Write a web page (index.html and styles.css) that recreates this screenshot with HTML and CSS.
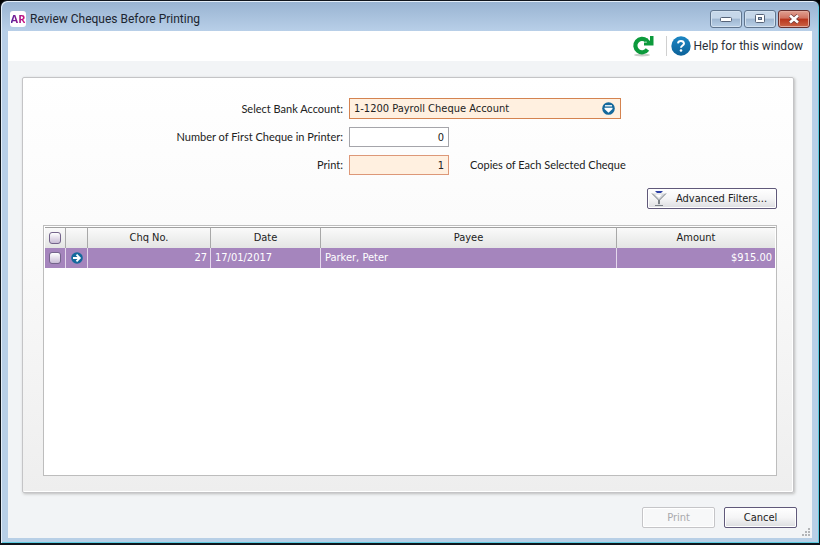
FILE: index.html
```html
<!DOCTYPE html>
<html lang="en">
<head>
<meta charset="utf-8">
<title>Review Cheques Before Printing</title>
<link rel="stylesheet" href="styles.css">
</head>
<body>
<div class="window">
  <header class="titlebar">
    <span class="logo"><span>AR</span></span>
    <h1>Review Cheques Before Printing</h1>
    <div class="controls">
      <button class="ctl" type="button" aria-label="Minimise"><svg width="14" height="10"><rect x="1.500" y="3.500" width="11" height="4" rx="1" fill="#fff" stroke="#566378"/></svg></button>
      <button class="ctl" type="button" aria-label="Maximise"><svg width="14" height="10"><rect x="2.500" y=".5" width="9" height="8" rx="1" fill="#fff" stroke="#566378"/><rect x="5.500" y="3.500" width="3" height="2" fill="#9fb6d0" stroke="#566378"/></svg></button>
      <button class="ctl close" type="button" aria-label="Close"><svg width="14" height="10"><path d="M3 1.500l8 7M11 1.500l-8 7" stroke="#6b3a3a" stroke-width="4"/><path d="M3 1.500l8 7M11 1.500l-8 7" stroke="#fff" stroke-width="2.600"/></svg></button>
    </div>
  </header>
  <main class="client">
    <div class="toolbar">
      <button class="icon-btn" type="button" aria-label="Refresh">
        <svg width="22" height="22" viewBox="0 0 22 22">
          <ellipse cx="10" cy="20" rx="8" ry="1.500" fill="#c9cfc9"/>
          <path d="M14.500 5.600A6.700 6.700 0 1 0 15.500 14.500" fill="none" stroke="#0c9a3c" stroke-width="4.200"/>
          <path d="M21.500 1v9.500H12V7.500h3L13 5l2-2 3 3V1z" fill="#0c9a3c"/>
        </svg>
      </button>
      <a class="help" href="#help">
        <svg width="20" height="20" viewBox="0 0 20 20">
          <defs><linearGradient id="blue" x2="0" y2="1"><stop stop-color="#1c86c4"/><stop offset="1" stop-color="#0c6299"/></linearGradient></defs>
          <circle cx="10" cy="10" r="9.700" fill="url(#blue)"/>
          <path d="M7 7.300Q7.300 5 10 5T13 7.500C13 9.500 10 9.500 10 11.800" fill="none" stroke="#fff" stroke-width="2"/>
          <circle cx="10" cy="14.500" r="1.300" fill="#fff"/>
        </svg>
        <span>Help for this window</span>
      </a>
    </div>
    <section class="panel">
      <form class="form">
        <label for="account">Select Bank Account:</label>
        <div class="select">
          <select id="account"><option>1-1200 Payroll Cheque Account</option></select>
          <svg width="13" height="13" viewBox="0 0 13 13"><circle cx="6.500" cy="6.500" r="6.300" fill="#15699c"/><path d="M3 3.800h7" stroke="#fff" stroke-width="1.300"/><path d="M2.500 5.800h8v1.200l-4 3.700-4-3.700z" fill="#fff"/></svg>
        </div>
        <label for="first">Number of First Cheque in Printer:</label>
        <div class="field"><input id="first" type="text" value="0"></div>
        <label for="copies">Print:</label>
        <div class="field"><input id="copies" class="required" type="text" value="1"><span>Copies of Each Selected Cheque</span></div>
      </form>
      <div class="filters">
        <button class="btn filter" type="button">
          <svg width="16" height="17" viewBox="0 0 16 17"><path d="M1 3.500h14L9 10v4.500l3 1.500H4l3-1.500V10z" fill="#d4d7da"/><path d="M1 3.500L7.500 10v4M15 3.500L8.500 10v4M4 15.500h8" fill="none" stroke="#7c8288"/><path d="M4 4.500h7L8 8z" fill="#fff"/><path d="M4 1h8L10 3H6z" fill="#2b3fa5"/></svg>
          <span>Advanced Filters...</span>
        </button>
      </div>
      <div class="list">
        <table>
          <colgroup><col class="c-tick"><col class="c-go"><col class="c-no"><col class="c-date"><col><col class="c-amount"></colgroup>
          <thead>
            <tr>
              <th><input type="checkbox" aria-label="Select all"></th>
              <th></th><th>Chq No.</th><th>Date</th><th>Payee</th><th>Amount</th>
            </tr>
          </thead>
          <tbody>
            <tr>
              <td class="mid"><input type="checkbox" aria-label="Select cheque 27"></td>
              <td class="mid"><a href="#cheque-27" aria-label="Open cheque 27"><svg width="12" height="12" viewBox="0 0 12 12"><circle cx="6" cy="6" r="5.800" fill="#15699c"/><path d="M2 6h6M5.500 2.700L8.800 6 5.500 9.300" fill="none" stroke="#fff" stroke-width="1.900"/></svg></a></td>
              <td class="num">27</td>
              <td>17/01/2017</td>
              <td>Parker, Peter</td>
              <td class="num">$915.00</td>
            </tr>
          </tbody>
        </table>
      </div>
    </section>
    <footer class="actions">
      <button class="btn" type="button" disabled>Print</button>
      <button class="btn" type="button">Cancel</button>
    </footer>
    <svg class="grip" width="8" height="8" viewBox="0 0 8 8"><path d="M6 0h2v2H6zM3 3h2v2H3zM6 3h2v2H6zM0 6h2v2H0zM3 6h2v2H3zM6 6h2v2H6z" fill="#b3b5b8"/></svg>
  </main>
</div>
</body>
</html>
```
FILE: styles.css
```css
* { box-sizing: border-box; }
html, body { height: 100%; }
body {
  margin: 0;
  background: #000;
  font: 11px/14px "DejaVu Sans Condensed", "Noto Sans", sans-serif;
  color: #222;
}
button, input, select { font: inherit; color: inherit; margin: 0; }
svg { display: block; flex: none; }
.window {
  min-height: 100vh;
  display: flex;
  flex-direction: column;
  padding: 0 6px 5px;
  border: 1px solid #10151c;
  border-bottom-width: 2px;
  border-radius: 7px 7px 0 0;
  background: linear-gradient(#98b3d1, #b8cfe8 30px, #b8cfe6);
  box-shadow: inset 1px 1px #e4eef8, inset -1px -1px #5ccbe0;
}
.titlebar {
  display: flex;
  align-items: center;
  height: 30px;
  padding: 6px 3px 0 3px;
  gap: 4px;
}
.logo {
  width: 16px;
  height: 16px;
  border-radius: 3px;
  background: #fff;
  text-align: center;
  font: bold 11px/16px "Open Sans", sans-serif;
}
.logo span {
  background: linear-gradient(90deg, #52209b, #d5127d);
  -webkit-background-clip: text;
  background-clip: text;
  color: transparent;
}
h1 {
  flex: 1;
  margin: 0;
  font: 12px/16px Roboto, "Noto Sans", sans-serif;
  color: #1c2530;
}
.controls { display: flex; gap: 2px; }
.ctl {
  display: grid;
  place-items: center;
  width: 32px;
  height: 18px;
  padding: 0;
  border: 1px solid #60758e;
  border-radius: 3px;
  background: linear-gradient(#c6d7e9 45%, #9fb7d1 50%, #bad0e7);
  box-shadow: inset 0 0 0 1px #d3e1ef;
}
.ctl.close {
  border-color: #67302f;
  background: linear-gradient(#e0a092, #d07260 45%, #b8341c 50%, #cc6547);
  box-shadow: inset 0 0 0 1px #e3a99c;
}
.client {
  position: relative;
  flex: 1;
  display: flex;
  flex-direction: column;
  margin: 0 1px;
  background: #f2f4f6;
}
.toolbar {
  display: flex;
  justify-content: flex-end;
  align-items: center;
  gap: 12px;
  height: 30px;
  padding-right: 9px;
  background: #fff;
}
.icon-btn { padding: 0; border: 0; background: none; }
.help {
  display: flex;
  align-items: center;
  gap: 3px;
  padding-left: 4px;
  border-left: 1px solid #d0d0d0;
  color: #2b3038;
  text-decoration: none;
  font: 12px/20px Roboto, "Noto Sans", sans-serif;
}
.panel {
  flex: 1;
  display: flex;
  flex-direction: column;
  margin: 16px 18px 0 14px;
  padding: 20px 16px 16px 20px;
  border: 1px solid #c4c4c6;
  border-radius: 2px;
  background: linear-gradient(#fff, #fbfbfb 35%, #eee);
  box-shadow: 1px 1px 3px #bbb, inset -1px -1px #fff;
}
.form {
  display: grid;
  grid-template-columns: 300px minmax(0, 1fr);
  column-gap: 6px;
  row-gap: 8px;
  align-items: center;
}
.form label, .field span {
  font-family: Lato, "Liberation Sans", sans-serif;
}
.form label { text-align: right; }
.select { position: relative; width: 272px; }
.select svg { position: absolute; right: 6px; top: 4px; pointer-events: none; }
select {
  display: block;
  appearance: none;
  width: 100%;
  height: 21px;
  padding: 0 4px;
  border: 1px solid #d48350;
  border-radius: 0;
  background: #fff0e0;
}
.field { display: flex; align-items: center; gap: 21px; }
.field input {
  width: 100px;
  height: 20px;
  padding: 0 4px;
  border: 1px solid #a5a5aa;
  background: #fff;
  text-align: right;
}
.field .required { border-color: #dd9878; background: #fff0e0; }
.filters { display: flex; justify-content: flex-end; margin: 13px 0 16px; }
.btn {
  width: 73px;
  height: 21px;
  padding: 0;
  border: 1px solid #60597a;
  border-radius: 2px;
  background: linear-gradient(#fff, #f5f5f6 50%, #dcdde0);
  box-shadow: inset 0 0 0 1px #fff;
}
.btn:disabled { border-color: #c5c5c8; color: #a9a9ac; background: #f7f8f9; }
.filter {
  display: flex;
  align-items: center;
  gap: 9px;
  width: 130px;
  padding-left: 3px;
}
.list {
  flex: 1;
  padding: 1px 0 0 1px;
  border: 1px solid #bdbdbd;
  background: #fff;
}
table { width: 100%; border-collapse: separate; border-spacing: 0; table-layout: fixed; }
.c-tick { width: 21px; }
.c-go { width: 22px; }
.c-no { width: 123px; }
.c-date { width: 110px; }
.c-amount { width: 159px; }
th, td { height: 20px; padding: 0 3px 0 4px; font-weight: normal; text-align: left; }
th {
  height: 21px;
  padding: 0;
  border-top: 1px solid #a0a0a0;
  border-right: 1px solid #a8a8a8;
  background: linear-gradient(#fafafa, #e4e5e4);
  text-align: center;
}
td { border-right: 1px solid #e4d8ec; background: #a585bd; color: #fff; }
th:last-child, td:last-child { border-right-color: #fff; }
td.mid { padding: 0; }
td.mid svg { margin: auto; }
td.num { text-align: right; }
input[type="checkbox"] {
  display: block;
  appearance: none;
  width: 12px;
  height: 12px;
  margin: 0 auto;
  border: 1px solid #74648b;
  border-radius: 3px;
  background: linear-gradient(#fff, #c9bdd6);
}
.actions {
  display: flex;
  justify-content: flex-end;
  gap: 9px;
  padding: 14px 15px 10px;
}
.grip { position: absolute; right: 2px; bottom: 2px; }
```
